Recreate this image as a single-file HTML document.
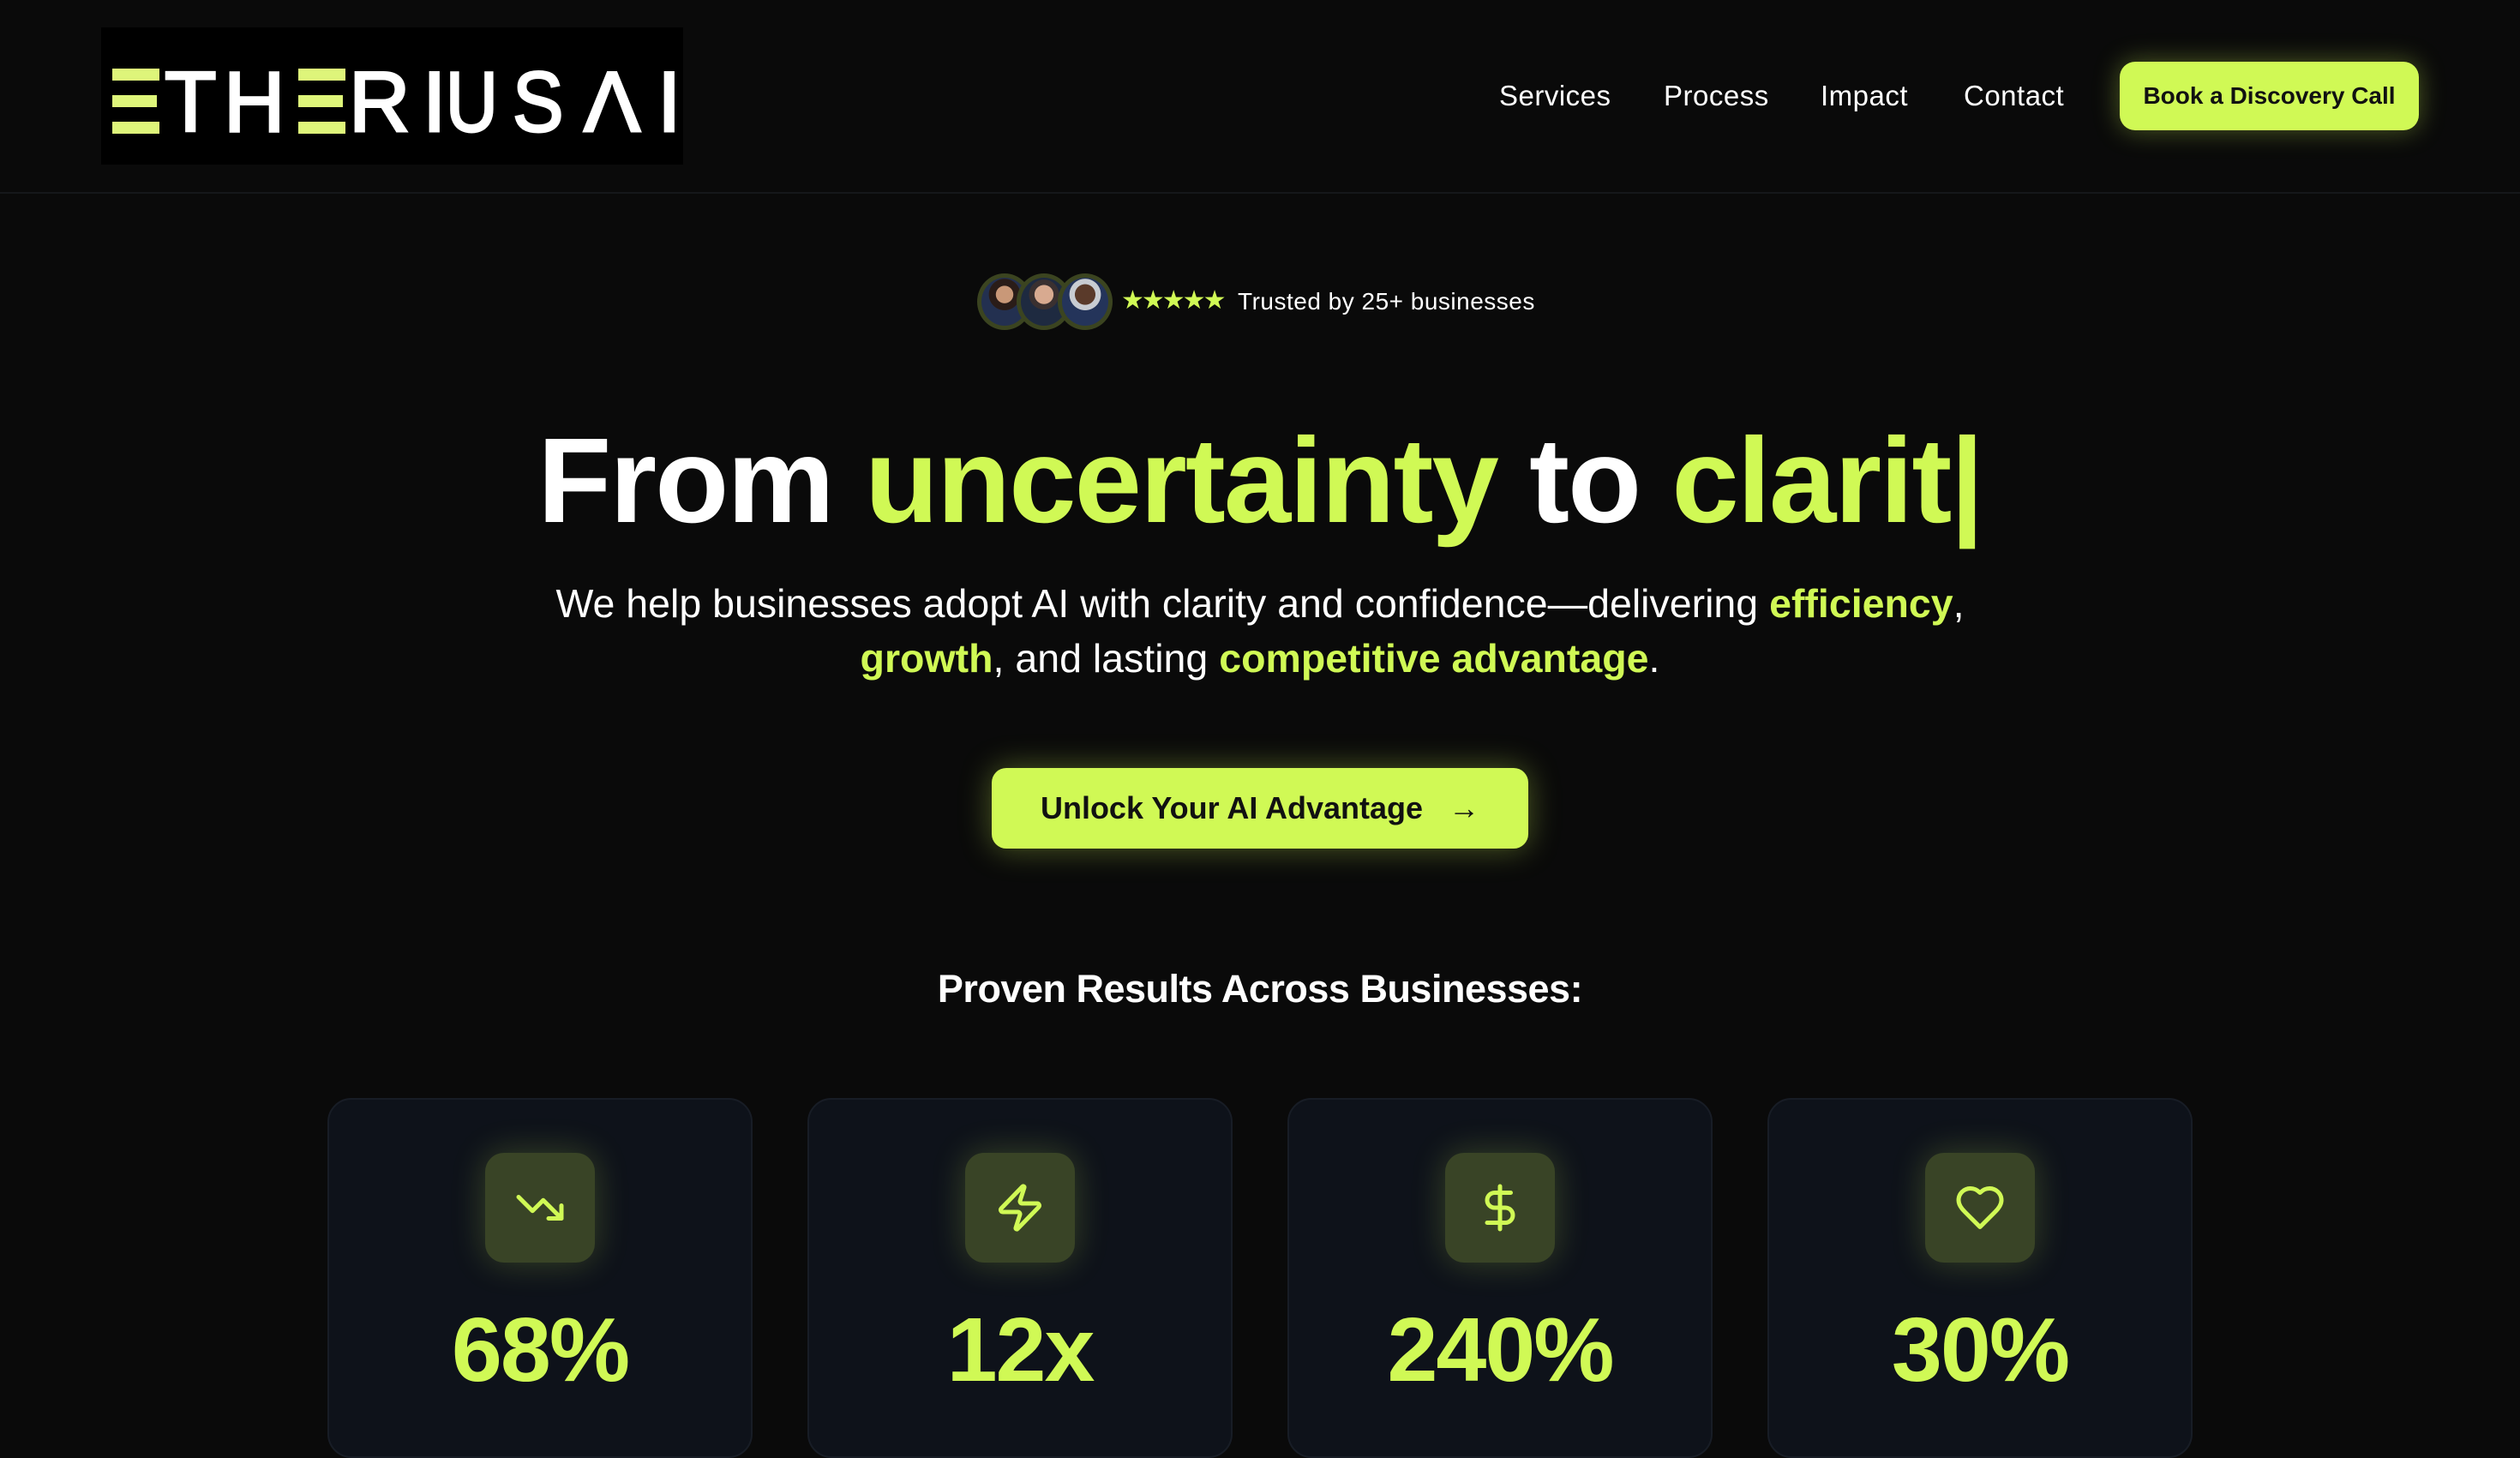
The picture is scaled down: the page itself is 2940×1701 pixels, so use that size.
<!DOCTYPE html>
<html><head><meta charset="utf-8"><style>
*{margin:0;padding:0;box-sizing:border-box}
body{width:2940px;height:1662px;background:#0a0a0a;overflow:hidden;font-family:"Liberation Sans",sans-serif;color:#fff;position:relative}
.lime{color:#d0f955}
nav{position:absolute;left:0;top:0;width:2940px;height:226px;border-bottom:2px solid #15171a}
.logo{position:absolute;left:118px;top:32px;width:679px;height:160px;background:#000}
.logo span{position:absolute;top:37px;font-size:99px;font-weight:normal;line-height:100px;color:#fff;transform-origin:left top;-webkit-text-stroke:3px #fff}
.bar{position:absolute;background:#def57a;height:14px}
.links{position:absolute;top:90px;font-size:33px;line-height:44px}
.links a{position:absolute;white-space:nowrap;color:#fff;text-decoration:none}
.navbtn{position:absolute;left:2473px;top:72px;width:349px;height:80px;background:#d0f955;border-radius:18px;color:#111;font-size:28px;font-weight:bold;text-align:center;line-height:80px;box-shadow:0 0 30px rgba(208,249,85,.35)}
.badge{position:absolute;left:1140px;top:319px;height:66px}
.av{position:absolute;top:0;width:64px;height:66px;border-radius:50%;border:5px solid #3b4420}
.stars{position:absolute;left:1308px;top:333px;font-size:30px;color:#d0f955;letter-spacing:-3px;line-height:36px}
.trust{position:absolute;left:1444px;top:332px;font-size:28px;line-height:40px;white-space:nowrap;letter-spacing:.5px}
h1{position:absolute;left:0;width:2940px;top:480px;text-align:center;font-size:141px;letter-spacing:-2px;line-height:160px;font-weight:bold}
.sub{position:absolute;left:0;width:2940px;top:672px;text-align:center;font-size:46.5px;line-height:64px;letter-spacing:0}
.sub b{color:#d0f955}
.cta{position:absolute;left:1157px;top:896px;width:626px;height:94px;background:#d0f955;border-radius:17px;color:#111;font-weight:bold;font-size:36px;line-height:94px;text-align:center;box-shadow:0 0 36px rgba(208,249,85,.35)}
.proven{position:absolute;left:0;width:2940px;top:1124px;text-align:center;font-size:45px;font-weight:bold;letter-spacing:-.5px;line-height:60px}
.card{position:absolute;top:1281px;width:496px;height:420px;background:#0e121a;border:2px solid #181d26;border-radius:28px}
.ic{position:absolute;left:182px;top:62px;width:128px;height:128px;border-radius:22px;background:#394426;box-shadow:0 0 40px rgba(208,249,85,.22);display:flex;align-items:center;justify-content:center}
.num{position:absolute;left:0;width:100%;top:232px;text-align:center;font-size:106px;font-weight:bold;color:#d0f955;line-height:120px;letter-spacing:-2px}
</style></head><body>
<nav>
<div class="logo">
 <div class="bar" style="left:13px;top:48px;width:55px"></div>
 <div class="bar" style="left:13px;top:79px;width:52px"></div>
 <div class="bar" style="left:13px;top:110px;width:55px"></div>
 <span style="left:74px">T</span>
 <span style="left:143px">H</span>
 <div class="bar" style="left:230px;top:48px;width:55px"></div>
 <div class="bar" style="left:230px;top:79px;width:52px"></div>
 <div class="bar" style="left:230px;top:110px;width:55px"></div>
 <span style="left:289px">R</span>
 <span style="left:375px">I</span>
 <span style="left:402px;transform:scaleX(.85)">U</span>
 <span style="left:480px;transform:scaleX(.9)">S</span>
 <span style="left:563px">Λ</span>
 <span style="left:649px">I</span>
</div>
<div class="links">
 <a style="left:1749px;letter-spacing:.5px">Services</a>
 <a style="left:1941px;letter-spacing:.5px">Process</a>
 <a style="left:2124px;letter-spacing:.5px">Impact</a>
 <a style="left:2291px;letter-spacing:.5px">Contact</a>
</div>
<div class="navbtn">Book a Discovery Call</div>
</nav>

<div class="badge">
 <div class="av" style="left:0;background:radial-gradient(circle at 50% 35%,#c99878 0 22%,#2a1c18 23% 40%,#233050 41%)"></div>
 <div class="av" style="left:46px;background:radial-gradient(circle at 50% 35%,#d8aa90 0 24%,#3a3030 25% 38%,#1e2a40 39%)"></div>
 <div class="av" style="left:94px;background:radial-gradient(circle at 50% 35%,#5a3a2a 0 26%,#c8ccd2 27% 40%,#24345a 41%)"></div>
</div>
<div class="stars">★★★★★</div>
<div class="trust">Trusted by 25+ businesses</div>

<h1>From <span class="lime">uncertainty</span> to <span class="lime">clarit|</span></h1>
<div class="sub">We help businesses adopt AI with clarity and confidence—delivering <b>efficiency</b>,<br><b>growth</b>, and lasting <b>competitive advantage</b>.</div>
<div class="cta">Unlock Your AI Advantage &nbsp;&nbsp;→</div>
<div class="proven">Proven Results Across Businesses:</div>

<div class="card" style="left:382px"><div class="ic"><svg width="60" height="60" viewBox="0 0 24 24" fill="none" stroke="#d0f955" stroke-width="2" stroke-linecap="round" stroke-linejoin="round"><polyline points="22 17 13.5 8.5 8.5 13.5 2 7"/><polyline points="16 17 22 17 22 11"/></svg></div><div class="num">68%</div></div>
<div class="card" style="left:942px"><div class="ic"><svg width="60" height="60" viewBox="0 0 24 24" fill="none" stroke="#d0f955" stroke-width="2" stroke-linecap="round" stroke-linejoin="round"><path d="M4 14a1 1 0 0 1-.78-1.63l9.9-10.2a.5.5 0 0 1 .86.46l-1.92 6.02A1 1 0 0 0 13 10h7a1 1 0 0 1 .78 1.63l-9.9 10.2a.5.5 0 0 1-.86-.46l1.92-6.02A1 1 0 0 0 11 14z"/></svg></div><div class="num">12x</div></div>
<div class="card" style="left:1502px"><div class="ic"><svg width="60" height="60" viewBox="0 0 24 24" fill="none" stroke="#d0f955" stroke-width="2" stroke-linecap="round" stroke-linejoin="round"><line x1="12" y1="2" x2="12" y2="22"/><path d="M17 5H9.5a3.5 3.5 0 0 0 0 7h5a3.5 3.5 0 0 1 0 7H6"/></svg></div><div class="num">240%</div></div>
<div class="card" style="left:2062px"><div class="ic"><svg width="60" height="60" viewBox="0 0 24 24" fill="none" stroke="#d0f955" stroke-width="2" stroke-linecap="round" stroke-linejoin="round"><path d="M19 14c1.49-1.46 3-3.21 3-5.5A5.5 5.5 0 0 0 16.5 3c-1.76 0-3 .5-4.5 2-1.5-1.5-2.74-2-4.5-2A5.5 5.5 0 0 0 2 8.5c0 2.3 1.5 4.05 3 5.5l7 7Z"/></svg></div><div class="num">30%</div></div>
</body></html>
